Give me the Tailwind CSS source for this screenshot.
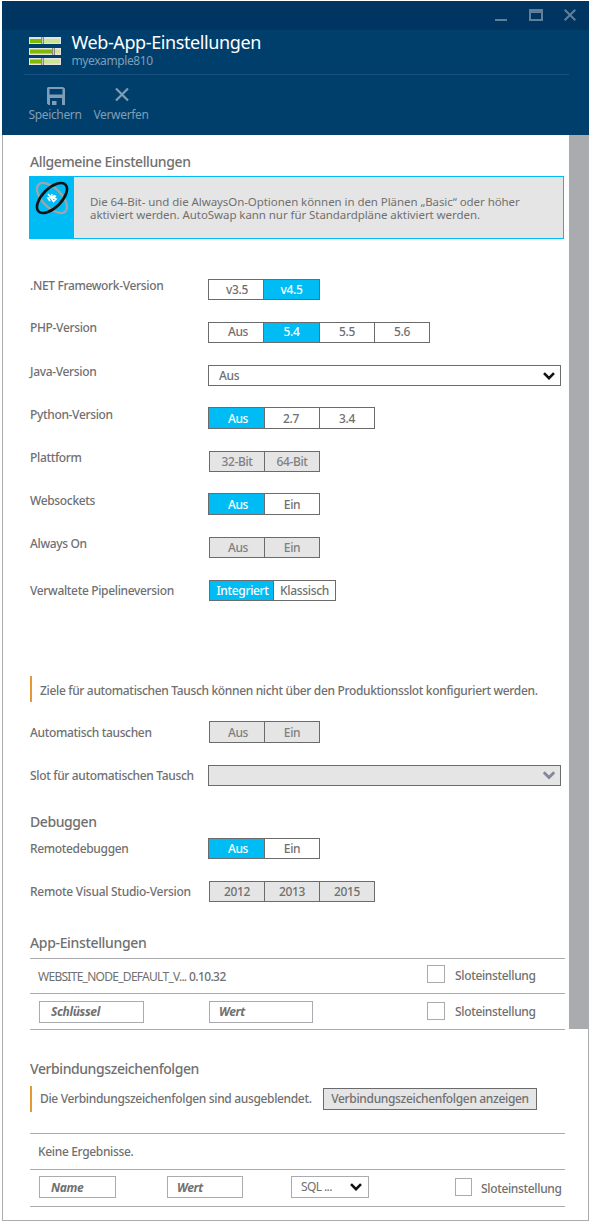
<!DOCTYPE html>
<html lang="de">
<head>
<meta charset="utf-8">
<title>Web-App-Einstellungen</title>
<script src="https://cdn.jsdelivr.net/npm/@tailwindcss/browser@4"></script>
</head>
<body class="bg-white">
<div class="h-[1222px] w-[589px] overflow-hidden bg-white pl-[2px] pt-px font-['Noto_Sans','Open_Sans',sans-serif] text-[12px] font-medium leading-[22px] tracking-[-0.34px] text-[#707070] whitespace-nowrap">
  <!-- Header -->
  <header class="h-[134px] bg-[#003e6c] text-[#7f9eb5]">
    <div class="flex h-[29px] items-start justify-end bg-[#003562] pr-[12px] pt-[7px]">
      <svg class="h-[14px] w-[83px]" viewBox="0 0 83 14" fill="none">
        <path d="M1 12h12" stroke="#5f7f9b" stroke-width="2"/>
        <path d="M35 1h14v12H35zM37 5v6h10V5z" fill="#5f7f9b" fill-rule="evenodd"/>
        <path d="M70.700 1.700l10.600 10.600M81.300 1.700L70.700 12.300" stroke="#5f7f9b" stroke-width="2"/>
      </svg>
    </div>
    <div class="ml-[22px] flex h-[45px] w-[545px] border-b border-[#1a5180] pl-[5px] pt-[7px]">
      <svg class="h-[29px] w-[32px]" viewBox="0 0 32 29">
        <path d="M0 0h32v7H0zM0 11h32v7H0zM0 21h32v7H0z" fill="#e4e4e4"/>
        <path d="M1 2h30v4H1zM1 12.500h30v4H1zM1 22.500h30v4H1z" fill="#cbe494"/>
        <path d="M1 2h11v4H1zM1 12.500h22v4H1zM1 22.500h11v4H1z" fill="#7fba00"/>
        <path d="M12 0h3v7h-3zM23 11h3v7h-3zM12 21h3v7h-3z" fill="#8b8b8b"/>
        <path d="M13 0h1v7h-1zM24 11h1v7h-1zM13 21h1v7h-1z" fill="#c8c8c8"/>
      </svg>
      <div class="ml-[10.500px] flex flex-col">
        <h1 class="h-[14px] text-[18px] font-normal leading-[11px] tracking-[-0.4px] text-white">Web-App-Einstellungen</h1>
        <span class="font-normal leading-[20px] tracking-[-0.4px]">myexample810</span>
      </div>
    </div>
    <div class="flex pl-[20px] pt-[11px] font-normal">
      <div class="flex w-[66px] flex-col items-center">
        <svg class="h-[20px] w-[20px]" viewBox="0 0 20 20"><path d="M3 1h15L20 2.500V19h-3v-7H5v7H3.500L2 17.500V2zM4.500 3v5.500h13V3zM7 15h4.500v4H7z" fill="#7f9eb5" fill-rule="evenodd"/></svg>
        <span class="leading-[17px]">Speichern</span>
      </div>
      <div class="flex w-[66px] flex-col items-center">
        <svg class="h-[20px] w-[20px]" viewBox="0 0 20 20"><path d="M5 2.500l12 12M17 2.500L5 14.500" stroke="#7f9eb5" stroke-width="2.200"/></svg>
        <span class="leading-[17px]">Verwerfen</span>
      </div>
    </div>
  </header>

  <div class="flex h-[1086px] border-b border-l border-[#a9abae]">
    <main class="w-[566px] pl-[27px]">
      <h2 class="h-[41px] pt-[16px] text-[14px] tracking-[-0.4px]">Allgemeine Einstellungen</h2>
      <div class="-ml-px flex h-[63px] w-[535px] border border-[#00bcf5] bg-[#e5e5e5]">
        <div class="w-[44px] bg-[#00bcf5] pl-[5px] pt-[4px]">
          <svg class="h-[34px] w-[34px]" viewBox="0 0 34 34" fill="none">
            <ellipse cx="17" cy="17" rx="19" ry="9.500" transform="rotate(45 17 17)" stroke="#a0a5a8" stroke-width="2.300"/>
            <path d="M13 13l3 3.500-3 .5 2 3M17 13l-1 3.500 4-2M16.500 17.500l2 3 2.500-2.500-3-1 3-2" stroke="#fff" stroke-width="1.600"/>
            <ellipse cx="17" cy="17" rx="19" ry="9.500" transform="rotate(-45 17 17)" stroke="#111" stroke-width="2.600"/>
          </svg>
        </div>
        <p class="pl-[16px] pt-[18px] text-[11.500px] font-normal leading-[13px] tracking-[-0.065px]">Die 64-Bit- und die AlwaysOn-Optionen können in den Plänen „Basic“ oder höher<br>aktiviert werden. AutoSwap kann nur für Standardpläne aktiviert werden.</p>
      </div>

      <div class="mt-[36px] flex h-[47px]">
        <span class="w-[178px]">.NET Framework-Version</span>
        <div class="mt-[4px] flex h-[21px] w-[112px] divide-x divide-[#6b6b6b] border border-[#6b6b6b] text-center leading-[19px]"><span class="w-[55px] pl-[2px]">v3.5</span><span class="grow bg-[#00bcf5] text-white">v4.5</span></div>
      </div>
      <div class="flex h-[43px]">
        <span class="-mt-[5px] w-[178px]">PHP-Version</span>
        <div class="flex h-[21px] w-[222px] divide-x divide-[#6b6b6b] border border-[#6b6b6b] text-center leading-[18px]"><span class="w-[55px] pl-[4px]">Aus</span><span class="w-[56px] bg-[#00bcf5] text-white">5.4</span><span class="w-[55px]">5.5</span><span class="grow">5.6</span></div>
      </div>
      <div class="flex h-[42px]">
        <span class="-mt-[4px] w-[178px]">Java-Version</span>
        <div class="flex h-[21px] w-[353px] items-center justify-between border border-[#6b6b6b] pl-[10px] pr-[5px]"><span>Aus</span><svg class="h-[8px] w-[12px]" viewBox="0 0 12 8" fill="none"><path d="M1 1.200l5 5 5-5" stroke="#111" stroke-width="2.600"/></svg></div>
      </div>
      <div class="flex h-[44px]">
        <span class="-mt-[3px] w-[178px]">Python-Version</span>
        <div class="flex h-[22px] w-[167px] divide-x divide-[#6b6b6b] border border-[#6b6b6b] text-center leading-[21px]"><span class="w-[56px] bg-[#00bcf5] pl-[3px] text-white">Aus</span><span class="w-[55px] pr-[2px]">2.7</span><span class="grow">3.4</span></div>
      </div>
      <div class="flex h-[42px]">
        <span class="-mt-[4px] w-[179px]">Plattform</span>
        <div class="flex h-[21px] w-[111px] divide-x divide-[#6b6b6b] border border-[#6b6b6b] bg-[#e5e5e5] text-center leading-[20px] text-[#808080]"><span class="w-[55px]">32-Bit</span><span class="grow">64-Bit</span></div>
      </div>
      <div class="flex h-[44px]">
        <span class="-mt-[3px] w-[178px]">Websockets</span>
        <div class="flex h-[22px] w-[112px] divide-x divide-[#6b6b6b] border border-[#6b6b6b] text-center leading-[21px]"><span class="w-[56px] bg-[#00bcf5] pl-[3px] text-white">Aus</span><span class="grow">Ein</span></div>
      </div>
      <div class="flex h-[43px]">
        <span class="-mt-[4px] w-[179px]">Always On</span>
        <div class="flex h-[21px] w-[111px] divide-x divide-[#6b6b6b] border border-[#6b6b6b] bg-[#e5e5e5] text-center leading-[20px] text-[#808080]"><span class="w-[55px] pl-[2px]">Aus</span><span class="grow">Ein</span></div>
      </div>
      <div class="flex h-[96px]">
        <span class="w-[179px]">Verwaltete Pipelineversion</span>
        <div class="flex h-[21px] w-[127px] divide-x divide-[#6b6b6b] border border-[#6b6b6b] text-center leading-[20px]"><span class="w-[64px] bg-[#00bcf5] pl-[2px] text-white">Integriert</span><span class="grow">Klassisch</span></div>
      </div>
      <div class="mb-[19px] flex h-[26px] border-l-2 border-[#e39a35] pl-[8px] leading-[30px]"><span>Ziele für automatischen Tausch können nicht über den Produktionsslot konfiguriert werden.</span></div>
      <div class="flex h-[44px]">
        <span class="mt-px w-[179px]">Automatisch tauschen</span>
        <div class="flex h-[22px] w-[111px] divide-x divide-[#6b6b6b] border border-[#6b6b6b] bg-[#e5e5e5] text-center leading-[21px] text-[#808080]"><span class="w-[55px] pl-[2px]">Aus</span><span class="grow">Ein</span></div>
      </div>
      <div class="flex h-[46px]">
        <span class="w-[178px]">Slot für automatischen Tausch</span>
        <div class="flex h-[21px] w-[353px] items-center justify-end border border-[#6b6b6b] bg-[#e5e5e5] pr-[5px]"><svg class="h-[9px] w-[12px]" viewBox="0 0 12 9" fill="none"><path d="M.8 1.200l5.200 5.200 5.200-5.200" stroke="#85889a" stroke-width="2.800"/></svg></div>
      </div>
      <h2 class="h-[27px] text-[14px] tracking-[-0.42px]">Debuggen</h2>
      <div class="flex h-[43px]">
        <span class="w-[178px]">Remotedebuggen</span>
        <div class="flex h-[21px] w-[112px] divide-x divide-[#6b6b6b] border border-[#6b6b6b] text-center leading-[20px]"><span class="w-[56px] bg-[#00bcf5] pl-[3px] text-white">Aus</span><span class="grow">Ein</span></div>
      </div>
      <div class="flex h-[51px]">
        <span class="w-[179px] tracking-[-0.28px]">Remote Visual Studio-Version</span>
        <div class="flex h-[21px] w-[166px] divide-x divide-[#6b6b6b] border border-[#6b6b6b] bg-[#e5e5e5] text-center leading-[19px]"><span class="w-[55px]">2012</span><span class="w-[55px]">2013</span><span class="grow">2015</span></div>
      </div>
      <h2 class="h-[26px] text-[14px] tracking-[-0.34px]">App-Einstellungen</h2>
      <div class="w-[535px] divide-y divide-[#a9abae] border-y border-[#a9abae]">
        <div class="flex h-[35px]">
          <span class="w-[151px] pl-[8px] font-normal leading-[35px] tracking-[-0.72px]">WEBSITE_NODE_DEFAULT_V...</span>
          <span class="w-[246px] pl-[8px] leading-[35px] tracking-[-0.6px]">0.10.32</span>
          <span class="mt-[6px] size-[18px] border border-[#a9abae]"></span>
          <span class="pl-[10px] leading-[34px]">Sloteinstellung</span>
        </div>
        <div class="flex h-[35px] pl-[9px]">
          <span class="mt-[7px] h-[22px] w-[105px] border border-[#a9abae] pl-[11px] font-bold italic leading-[20px]">Schlüssel</span>
          <span class="ml-[65px] mt-[7px] h-[22px] w-[104px] border border-[#a9abae] pl-[9px] font-bold italic leading-[20px]">Wert</span>
          <span class="ml-[114px] mt-[8px] size-[18px] border border-[#a9abae]"></span>
          <span class="pl-[10px] leading-[35px]">Sloteinstellung</span>
        </div>
      </div>
      <h2 class="mt-[28px] h-[28px] text-[14px] tracking-[-0.42px]">Verbindungszeichenfolgen</h2>
      <div class="mb-[21px] flex h-[26px] border-l-2 border-[#e39a35] pl-[8px] leading-[26px]">
        <span class="w-[283px]">Die Verbindungszeichenfolgen sind ausgeblendet.</span>
        <button class="mt-[2px] h-[22px] w-[214px] border border-[#6b6b6b] bg-[#e5e5e5] leading-[20px]">Verbindungszeichenfolgen anzeigen</button>
      </div>
      <div class="w-[535px] divide-y divide-[#a9abae] border-y border-[#a9abae]">
        <div class="h-[36px] pl-[8px] leading-[35px]">Keine Ergebnisse.</div>
        <div class="flex h-[36px] pl-[9px]">
          <span class="mt-[6px] h-[22px] w-[77px] border border-[#a9abae] pl-[11px] font-bold italic">Name</span>
          <span class="ml-[51px] mt-[6px] h-[22px] w-[76px] border border-[#a9abae] pl-[9px] font-bold italic">Wert</span>
          <div class="ml-[48px] mt-[6px] flex h-[22px] w-[78px] items-center justify-between border border-[#a9abae] pl-[9px] pr-[6px] font-normal"><span class="tracking-[-0.6px]">SQL ...</span><svg class="h-[8px] w-[12px]" viewBox="0 0 12 8" fill="none"><path d="M1 1.200l5 5 5-5" stroke="#111" stroke-width="2.600"/></svg></div>
          <span class="ml-[86px] mt-[8px] h-[18px] w-[17px] border border-[#a9abae]"></span>
          <span class="pl-[9px] leading-[37px]">Sloteinstellung</span>
        </div>
      </div>
    </main>
    <aside class="flex w-[20px] flex-col">
      <div class="h-[894px] bg-[#a9abae]"></div>
      <div class="grow border-r border-[#a9abae]"></div>
    </aside>
  </div>
</div>
</body>
</html>
